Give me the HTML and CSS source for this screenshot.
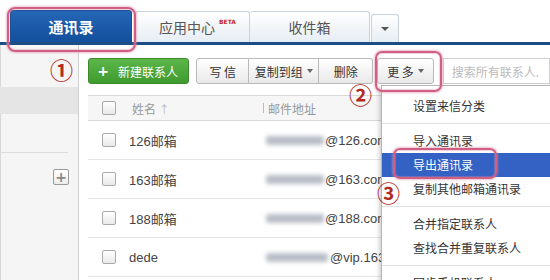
FILE: index.html
```html
<!DOCTYPE html>
<html lang="zh-CN">
<head>
<meta charset="utf-8">
<title>通讯录</title>
<link rel="stylesheet" href="styles.css">
</head>
<body>
<div class="app">
  <div class="tabbar">
    <div class="tab tab-active">通讯录</div>
    <div class="tab tab-apps">应用中心<span class="beta">BETA</span></div>
    <div class="tab tab-inbox">收件箱</div>
    <div class="tab tab-drop"><span class="caret"></span></div>
  </div>
  <div class="body">
    <aside class="sidebar">
      <div class="side-top"></div>
      <div class="side-sel"></div>
      <div class="side-gap"></div>
      <div class="side-add"><span class="plus-box">+</span></div>
    </aside>
    <main class="main">
      <div class="toolbar">
        <button class="btn btn-green"><span class="plus">+</span>新建联系人</button>
        <div class="btn-group">
          <button class="btn">写&nbsp;信</button>
          <button class="btn">复制到组<span class="caret small"></span></button>
          <button class="btn">删除</button>
        </div>
        <button class="btn btn-more">更&nbsp;多<span class="caret small"></span></button>
        <div class="search">搜索所有联系人.</div>
      </div>
      <div class="table">
        <div class="row head">
          <span class="cb"></span>
          <span class="name">姓名 <span class="arrow">↑</span></span>
          <span class="email"><span class="divider"></span>邮件地址</span>
        </div>
        <div class="row">
          <span class="cb"></span>
          <span class="name">126邮箱</span>
          <span class="email"><span class="blur"></span>@126.com</span>
        </div>
        <div class="row">
          <span class="cb"></span>
          <span class="name">163邮箱</span>
          <span class="email"><span class="blur"></span>@163.com</span>
        </div>
        <div class="row">
          <span class="cb"></span>
          <span class="name">188邮箱</span>
          <span class="email"><span class="blur"></span>@188.com</span>
        </div>
        <div class="row">
          <span class="cb"></span>
          <span class="name">dede</span>
          <span class="email"><span class="blur blur-wide"></span>@vip.163.com</span>
        </div>
      </div>
    </main>
  </div>

  <div class="menu">
    <div class="menu-item">设置来信分类</div>
    <div class="menu-sep"></div>
    <div class="menu-item">导入通讯录</div>
    <div class="menu-item menu-hi">导出通讯录</div>
    <div class="menu-item">复制其他邮箱通讯录</div>
    <div class="menu-sep"></div>
    <div class="menu-item">合并指定联系人</div>
    <div class="menu-item">查找合并重复联系人</div>
    <div class="menu-sep"></div>
    <div class="menu-item">同步手机联系人</div>
  </div>

  <div class="mark mark-tab"></div>
  <div class="mark mark-more"></div>
  <div class="mark mark-export"></div>
  <span class="num num1">①</span>
  <span class="num num2">②</span>
  <span class="num num3">③</span>
</div>
</body>
</html>
```

FILE: styles.css
```css
* { box-sizing: border-box; }
html, body {
  margin: 0;
  padding: 0;
  background: #ffffff;
}
body {
  width: 550px;
  height: 280px;
  overflow: hidden;
  font-family: "Liberation Sans", "Noto Sans CJK SC", sans-serif;
  font-size: 12px;
  color: #333;
}
.app {
  position: relative;
  width: 550px;
  height: 280px;
  overflow: hidden;
}

/* ---------- tabs ---------- */
.tabbar {
  display: flex;
  align-items: flex-end;
  height: 45px;
  padding-left: 10px;
  border-bottom: 3px solid #1c4d85;
  background: #fff;
}
.tab {
  display: flex;
  align-items: center;
  justify-content: center;
  height: 31px;
  font-family: "Noto Sans CJK SC", sans-serif;
  font-size: 14px;
  color: #555;
  background: linear-gradient(#ffffff, #e6edf4);
  border: 1px solid #c9d1da;
  border-bottom: none;
  border-radius: 3px 3px 0 0;
}
.tab-active {
  width: 122px;
  height: 32px;
  color: #fff;
  font-weight: bold;
  font-size: 15px;
  background: linear-gradient(#2466b6, #134f9c);
  border-color: #1a4f90;
}
.tab-apps {
  width: 115px;
  margin-left: 3px;
  padding-left: 10px;
}
.beta {
  align-self: flex-start;
  margin-top: 6px;
  margin-left: 4px;
  font-family: "DejaVu Sans", sans-serif;
  font-size: 6px;
  font-weight: bold;
  color: #c4282a;
}
.tab-inbox {
  width: 120px;
  border-left: none;
}
.tab-drop {
  width: 28px;
  height: 28px;
  margin-left: 1px;
}
.caret {
  display: inline-block;
  width: 0;
  height: 0;
  border-left: 4px solid transparent;
  border-right: 4px solid transparent;
  border-top: 4px solid #555;
}
.caret.small {
  margin-left: 4px;
  border-left-width: 3.5px;
  border-right-width: 3.5px;
  border-top: 4px solid #666;
  vertical-align: middle;
}

/* ---------- body ---------- */
.body {
  display: flex;
  height: 235px;
}
.sidebar {
  width: 79px;
  flex-shrink: 0;
  background: #f5f5f5;
  border-left: 1px solid #d8d8d8;
  border-right: 1px solid #cfcfcf;
  display: flex;
  flex-direction: column;
}
.side-top { height: 42px; }
.side-sel { height: 27px; background: #e5e5e5; margin-left: -1px; }
.side-gap {
  height: 39px;
  margin-right: 10px;
  border-bottom: 1px solid #dcdcdc;
}
.side-add {
  display: flex;
  justify-content: flex-end;
  padding-top: 16px;
  padding-right: 9px;
}
.plus-box {
  width: 16px;
  height: 16px;
  display: flex;
  align-items: center;
  justify-content: center;
  border: 1px solid #9a9a9a;
  border-radius: 2px;
  background: linear-gradient(#ffffff, #ececec);
  color: #888;
  font-size: 14px;
  font-weight: bold;
  line-height: 1;
  font-family: "DejaVu Sans", sans-serif;
}

.main {
  flex: 1;
  padding-left: 9px;
  min-width: 0;
}
.toolbar {
  display: flex;
  align-items: center;
  height: 26px;
  margin-top: 13px;
}
.btn {
  height: 26px;
  padding: 0;
  display: flex;
  align-items: center;
  justify-content: center;
  font-family: "Noto Sans CJK SC", sans-serif;
  font-size: 12px;
  color: #333;
  background: linear-gradient(#ffffff, #e9e9e9);
  border: 1px solid #b9b9b9;
  border-radius: 3px;
}
.btn-green {
  width: 104px;
  color: #fff;
  background: linear-gradient(#5cb64a, #3f9a2f);
  border-color: #3d8a2e;
}
.plus {
  font-family: "DejaVu Sans", sans-serif;
  font-weight: bold;
  font-size: 14px;
  margin-right: 9px;
  margin-left: -2px;
}
.btn-group {
  display: flex;
  margin-left: 7px;
}
.btn-group .btn { border-radius: 0; }
.btn-group .btn:first-child { width: 53px; border-radius: 3px 0 0 3px; }
.btn-group .btn:nth-child(2) { width: 70px; border-left: none; }
.btn-group .btn:nth-child(3) { width: 54px; border-left: none; border-radius: 0 3px 3px 0; }
.btn-more {
  width: 58px;
  margin-left: 4px;
}
.search {
  width: 110px;
  height: 26px;
  margin-left: 9px;
  padding-left: 8px;
  display: flex;
  align-items: center;
  border: 1px solid #cfcfcf;
  color: #bbb;
  font-family: "Noto Sans CJK SC", sans-serif;
  font-size: 12px;
  white-space: nowrap;
}

/* ---------- table ---------- */
.table {
  margin-top: 11px;
  border-top: 1px solid #d9d9d9;
}
.row {
  display: flex;
  align-items: center;
  height: 39px;
  border-bottom: 1px solid #e6e6e6;
  font-family: "Liberation Sans", "Noto Sans CJK SC", sans-serif;
  font-size: 13px;
  color: #444;
  white-space: nowrap;
}
.row.head {
  height: 25px;
  background: #f6f6f6;
  border-bottom-color: #d7d7d7;
  color: #999;
  font-family: "Noto Sans CJK SC", sans-serif;
  font-size: 12px;
}
.cb {
  width: 14px;
  height: 14px;
  margin-left: 14px;
  flex-shrink: 0;
  border: 1px solid #a9a9a9;
  border-radius: 2px;
  background: linear-gradient(#ffffff, #e9e9e9);
}
.name {
  width: 149px;
  padding-left: 13px;
  flex-shrink: 0;
}
.head .name { padding-left: 16px; }
.arrow { color: #bbb; font-size: 11px; }
.divider {
  width: 1px;
  height: 10px;
  margin-left: -3px;
  margin-right: 4px;
  background: #bbb;
}
.email {
  display: flex;
  align-items: center;
  padding-left: 1px;
  color: #444;
}
.head .email { color: #999; }
.blur {
  display: inline-block;
  width: 58px;
  height: 9px;
  margin-right: 1px;
  background: #b9bec6;
  border-radius: 3px;
  filter: blur(2px);
}
.blur-wide { width: 62px; margin-right: 2px; }

/* ---------- dropdown menu ---------- */
.menu {
  position: absolute;
  left: 381px;
  top: 85px;
  width: 180px;
  height: 210px;
  padding-top: 8px;
  background: #fff;
  border: 1px solid #b5b5b5;
  box-shadow: -2px 2px 4px rgba(0,0,0,0.18);
  font-family: "Noto Sans CJK SC", sans-serif;
  font-size: 12px;
  color: #333;
}
.menu-item {
  height: 24px;
  line-height: 24px;
  padding-left: 31px;
  white-space: nowrap;
}
.menu-hi {
  background: #3462c4;
  color: #fff;
}
.menu-sep {
  height: 11px;
  position: relative;
}
.menu-sep::after {
  content: "";
  position: absolute;
  left: 0;
  right: 0;
  top: 5px;
  border-top: 1px solid #e0e0e0;
}

/* ---------- annotations ---------- */
.mark {
  position: absolute;
  border: 2px solid #cf5f83;
  border-radius: 8px;
  box-shadow: 0 0 2px 1px rgba(220,140,165,0.55), inset 0 0 1px 1px rgba(220,140,165,0.4);
}
.mark-tab { left: 7px; top: 7px; width: 129px; height: 45px; }
.mark-more { left: 375px; top: 51px; width: 67px; height: 41px; border-radius: 7px; }
.mark-export { left: 393px; top: 148px; width: 104px; height: 31px; border-radius: 7px; }
.num {
  position: absolute;
  font-family: "Noto Sans CJK SC", sans-serif;
  font-weight: bold;
  font-size: 23px;
  line-height: 24px;
  color: #b02a22;
}
.num1 { left: 50px; top: 57px; }
.num2 { left: 349px; top: 82px; }
.num3 { left: 377px; top: 180px; }
```
